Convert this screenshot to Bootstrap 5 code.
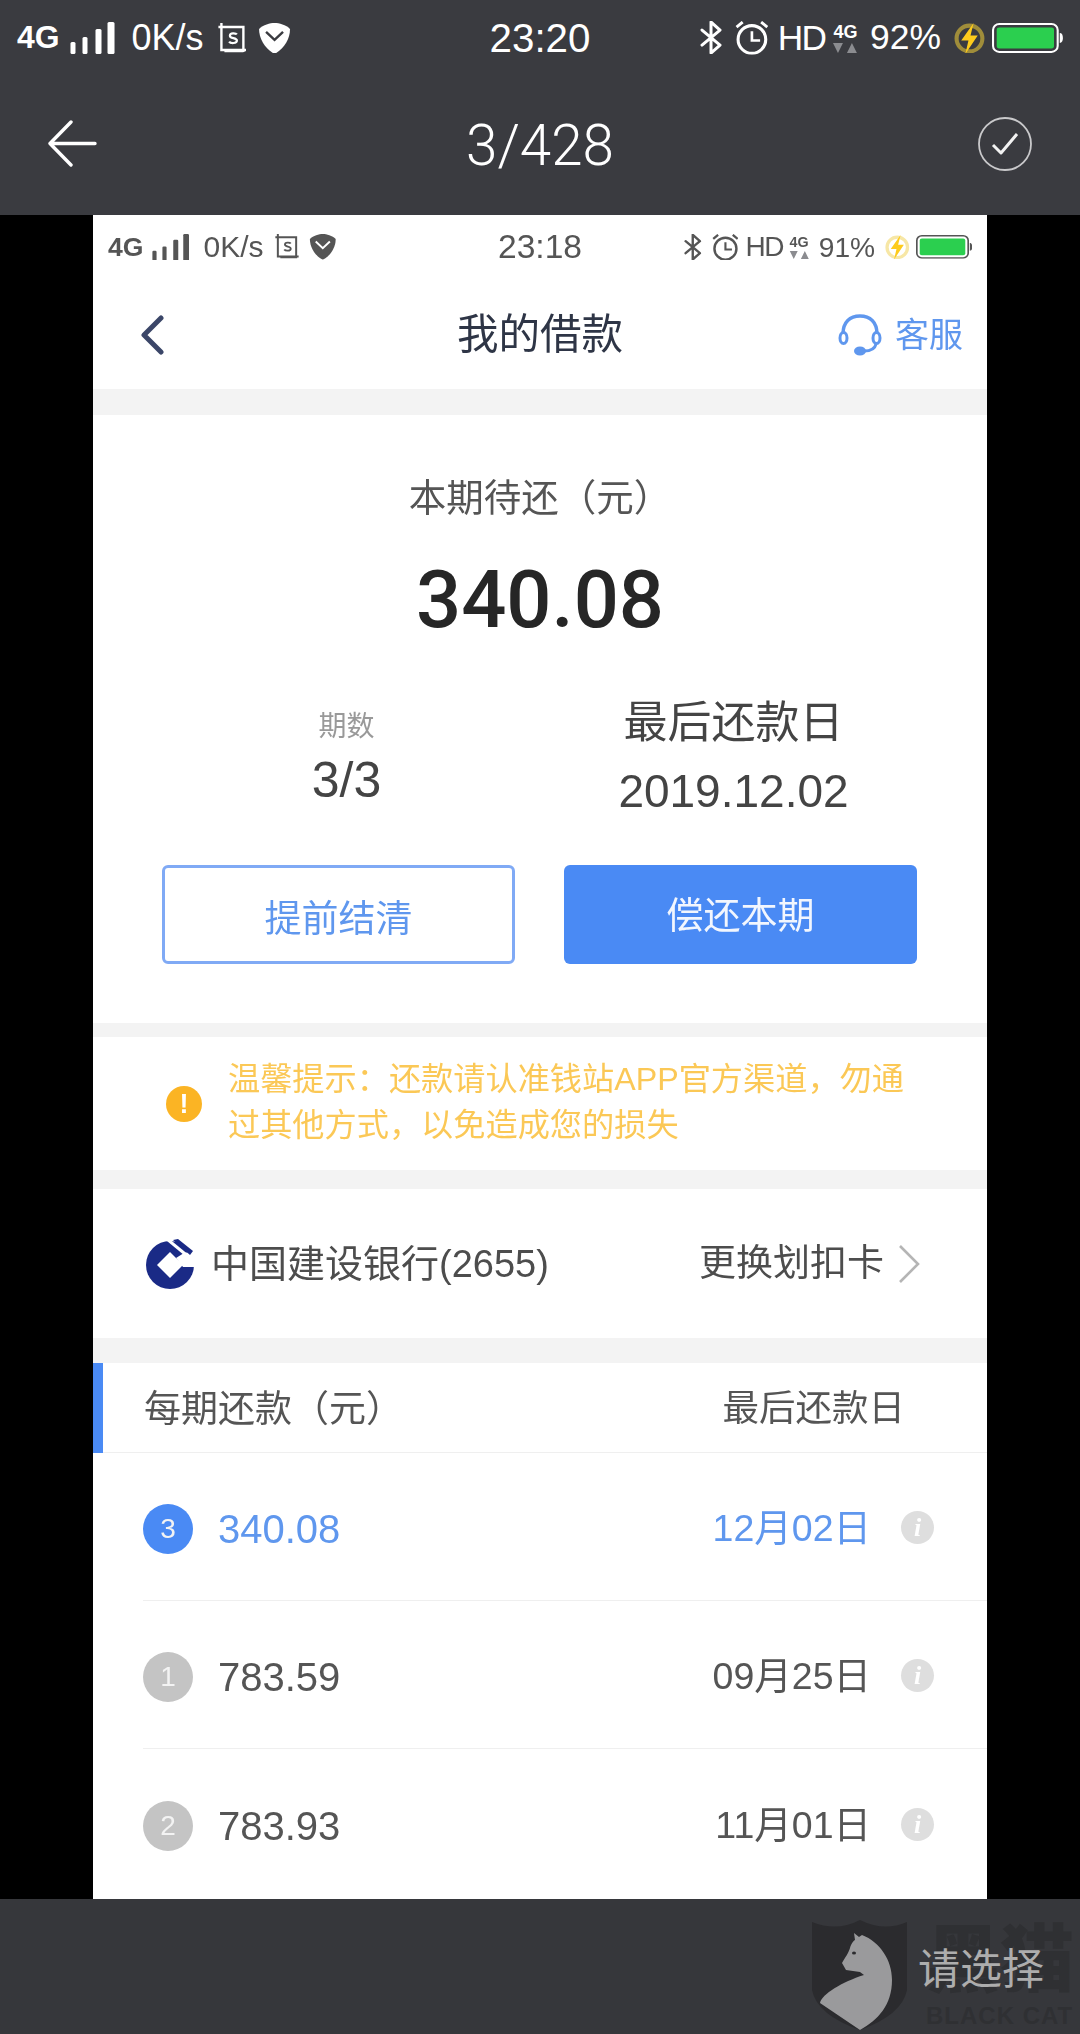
<!DOCTYPE html>
<html lang="zh-CN">
<head>
<meta charset="utf-8">
<title>3/428</title>
<link href="https://cdn.jsdelivr.net/npm/bootstrap@5.3.0/dist/css/bootstrap.min.css" rel="stylesheet">
<style>
html,body{margin:0;height:2034px;overflow:hidden;background:#000}
body{font-family:"Liberation Sans","Noto Sans CJK SC",sans-serif;color:#333}
.page{width:1080px;height:2034px}
.dark-top{height:215px;background:#3a3b40;color:#fff}
.stage{height:1684px;background:#000}
.phone-panel{width:894px;height:1684px;background:#fff;filter:blur(.5px)}
.dark-bottom{height:135px;background:#36373b;padding:6px 36px 0 0;position:relative;overflow:hidden}
.pick-text{font-size:42px;color:#adadad;position:relative;line-height:1}
.wm-shield{position:absolute;left:812px;top:21px;width:95px;height:110px}
.wm-big{position:absolute;left:926px;top:22px;font-size:74px;line-height:80px;font-weight:900;color:#2f3033;white-space:nowrap}
.wm-small{position:absolute;left:926px;top:103px;font-size:24px;line-height:28px;font-weight:700;color:#2f3033;letter-spacing:1px;white-space:nowrap}

.sbar{display:grid;grid-template-columns:1fr auto 1fr;align-items:center;line-height:1;white-space:nowrap}
.sbar svg{display:block;flex:none}
.sbar-out{font-size:36px;height:72px;padding:4px 17px 0;color:#fff}
.sbar-in{font-size:30px;height:60px;padding:4px 15px 0;color:#555}
.sbar-in .st-right{font-size:28.6px}
.st-4g{font-size:.886em;font-weight:700}
.ic-bars{width:1.25em;height:.89em;margin:0 .47em 0 .28em}
.ic-crop{width:.8em;height:.86em;margin-left:.39em}
.ic-shield{width:.92em;height:.86em;margin-left:.33em}
.st-time{font-size:1.12em}
.ic-bt{width:.64em;height:.92em}
.ic-alarm{width:.94em;height:.94em;margin-left:.33em}
.st-hd{font-size:.98em;margin-left:.25em;letter-spacing:-.05em}
.st-net{width:.72em;margin-left:.2em;font-size:1em}
.st-net-t{font-size:.5em;font-weight:700;display:block;text-align:center;line-height:1}
.ic-tri{width:.72em;height:.28em;margin-top:.08em}
.st-pct{font-size:.985em;margin-left:.33em}
.ic-bolt{width:.86em;height:.86em;margin-left:.36em}
.ic-batt{width:1.97em;height:.83em;margin-left:.2em}

.page-nav{display:grid;grid-template-columns:1fr auto 1fr;align-items:center;height:143px;padding:0 48px}
.page-count{font-family:Roboto,"Liberation Sans",sans-serif;font-weight:300;font-size:56.5px;line-height:1;padding-top:6px}

.hdr{height:114px;padding:5px 24px 0;display:grid;grid-template-columns:1fr auto 1fr;align-items:center}
.hdr-back{margin-left:23px}
.hdr-title{font-size:41.5px;color:#2e3546;font-weight:400;line-height:1}
.hdr-link{font-size:34px;color:#5f97ee;line-height:1;gap:13px}
.gap-band{background:#f3f3f3}
.gb-26{height:26px}.gb-14{height:14px}.gb-19{height:19px}.gb-25{height:25px}

.due{height:608px;padding-top:61px}
.due-label{font-size:37.5px;line-height:44px;color:#555}
.due-amt{font-family:Roboto,"Liberation Sans",sans-serif;font-size:79.5px;line-height:90px;font-weight:500;color:#262626;margin-top:35px}
.stats{margin-top:50px;padding:0 60px}
.st-a{font-size:28px;line-height:40px;color:#999;margin-top:12px}
.st-b{font-size:50px;line-height:56px;color:#444;margin-top:5px}
.st-c{font-size:44px;line-height:56px;color:#444}
.st-d{font-size:46px;line-height:56px;color:#444;margin-top:12px}
.act-row{margin-top:46px;padding:0 69px;gap:49px}
.btn.act{width:353px;height:99px;font-size:37px;border-radius:6px;padding:0;line-height:1;display:flex;align-items:center;justify-content:center}
.btn.act-o{background:#fff;border:3px solid #80aaf5;color:#5f97ee;padding-top:10px}
.btn.act-f{background:#4a8af4;border:0;color:#f2f6fe;padding-top:4px}

.tip{height:133px;padding:0 0 4px 73px;gap:26px}
.tip-mark{width:36px;height:36px;border-radius:50%;background:#fbb424;color:#fff;font-size:27px;font-weight:700;line-height:36px;text-align:center;flex:none;margin-top:4px}
.tip-text{font-size:32.2px;line-height:46px;color:#fbc856;width:690px}

.bank{height:149px;padding:0 66px 0 53px}
.bank-name{font-size:38px;color:#4d4d4d;margin-left:17px;line-height:1}
.bank-act{font-size:37px;color:#4d4d4d;line-height:1}
.bank-chev{width:24px;height:40px;margin-left:13px;display:block}

.t-head{height:90px;border-left:10px solid #4a8af4;padding:3px 82px 0 41px;position:relative;color:#555;line-height:1}
.t-head-l{font-size:37px}
.t-head-r{font-size:36.5px}
.t-line{height:1px;background:#efefef;margin-top:-1px}
.t-row{height:148px;margin-left:50px;padding:5px 53px 0 0;border-bottom:1px solid #efefef}
.t-row-end{border-bottom:0}
.num-dot{width:50px;height:50px;border-radius:50%;background:#c4c4c4;color:#f3f3f3;font-size:28px;line-height:50px;text-align:center;flex:none}
.num-dot-on{background:#4a8af4}
.t-amt{font-size:40px;color:#555;margin-left:25px;line-height:1}
.t-date{font-size:37.5px;color:#555;line-height:1}
.is-on{color:#5f97ee}
.inf-dot{width:33px;height:33px;border-radius:50%;background:#dedede;color:#fff;font:italic 700 26px/33px "Liberation Serif",serif;text-align:center;margin-left:30px;flex:none;margin-top:-3px}
</style>
</head>
<body>
<svg width="0" height="0" class="position-absolute">
  <symbol id="s-bars" viewBox="0 0 44 32"><rect x="0" y="20" width="5" height="12" rx="1.5" fill="currentColor"/><rect x="12" y="15" width="5" height="17" rx="1.5" fill="currentColor"/><rect x="25" y="7" width="6" height="25" rx="1.5" fill="currentColor"/><rect x="37" y="0" width="7" height="32" rx="1.5" fill="currentColor"/></symbol>
  <symbol id="s-crop" viewBox="0 0 28 31"><path d="M3 0v4h22v25M0 4h3v23h25M6 28h19" fill="none" stroke="currentColor" stroke-width="2.4"/><path d="M18.500 11.500c-1-1.500-7-2-7 1.200 0 3.300 7 1.600 7 4.900 0 3.200-6.500 3-7.800 1" fill="none" stroke="currentColor" stroke-width="2.200"/></symbol>
  <symbol id="s-shield" viewBox="0 0 31 31"><path d="M15.500 0C20 0 27 2 31 6c0 10-6 20-15.500 25C6 26 0 16 0 6 4 2 11 0 15.500 0z" fill="currentColor"/><path d="M7 9l8.500 8L24 9" fill="none" stroke="var(--hole)" stroke-width="2.400"/></symbol>
  <symbol id="s-bt" viewBox="0 0 23 33"><path d="M2 9l18 15-9 8V1l9 8L2 24" fill="none" stroke="currentColor" stroke-width="3" stroke-linejoin="round" stroke-linecap="round"/></symbol>
  <symbol id="s-alarm" viewBox="0 0 32 33"><circle cx="16" cy="18" r="13.500" fill="none" stroke="currentColor" stroke-width="3"/><path d="M16 10v9h8" fill="none" stroke="currentColor" stroke-width="2.600"/><path d="M1 6l6-5M31 6l-6-5" fill="none" stroke="currentColor" stroke-width="2.800"/></symbol>
  <symbol id="s-tri" viewBox="0 0 26 10"><path d="M1 0h10l-5 10zM15 10h10l-5-10z" fill="#8b8c90"/></symbol>
  <symbol id="s-bolt" viewBox="0 0 30 30"><circle cx="15" cy="15" r="12.500" fill="none" stroke="var(--ring)" stroke-width="4"/><path d="M19 0L7 17h7l-3 13 12-18h-7z" fill="#fdcb1c"/></symbol>
  <symbol id="s-batt" viewBox="0 0 68 30" preserveAspectRatio="none"><rect x="1" y="1" width="62" height="28" rx="6" fill="none" stroke="currentColor" stroke-width="2"/><rect x="4.500" y="4.500" width="55" height="21" rx="2.500" fill="#2bcf4f"/><path d="M65 10c2 0 3 2 3 5s-1 5-3 5z" fill="currentColor"/></symbol>
</svg>
<div class="page d-flex flex-column">
  <div class="dark-top">
    <div class="sbar sbar-out" style="--hole:#3a3b40;--ring:#a08d3a">
      <div class="d-flex align-items-center"><span class="st-4g">4G</span><svg class="ic-bars"><use href="#s-bars"/></svg><span>0K/s</span><svg class="ic-crop"><use href="#s-crop"/></svg><svg class="ic-shield"><use href="#s-shield"/></svg></div>
      <div class="st-time">23:20</div>
      <div class="d-flex align-items-center justify-content-end st-right"><svg class="ic-bt"><use href="#s-bt"/></svg><svg class="ic-alarm"><use href="#s-alarm"/></svg><span class="st-hd">HD</span><span class="st-net"><span class="st-net-t">4G</span><svg class="ic-tri"><use href="#s-tri"/></svg></span><span class="st-pct">92%</span><svg class="ic-bolt"><use href="#s-bolt"/></svg><svg class="ic-batt"><use href="#s-batt"/></svg></div>
    </div>
    <div class="page-nav">
      <div><svg width="49" height="47" viewBox="0 0 49 47" class="d-block"><path d="M23 2L2 23.500 23 45M2 23.500h45" fill="none" stroke="#fff" stroke-width="3.400" stroke-linecap="round" stroke-linejoin="round"/></svg></div>
      <div class="page-count">3/428</div>
      <div class="d-flex justify-content-end"><svg width="54" height="54" viewBox="0 0 54 54" class="d-block"><circle cx="27" cy="27" r="26" fill="none" stroke="#c9c9cb" stroke-width="1.800"/><path d="M15 28l8 8 16-19" fill="none" stroke="#f2f2f2" stroke-width="3" stroke-linejoin="round"/></svg></div>
    </div>
  </div>

  <div class="stage d-flex justify-content-center">
    <div class="phone-panel">
      <div class="sbar sbar-in" style="--hole:#fff;--ring:#f7e7a6">
        <div class="d-flex align-items-center"><span class="st-4g">4G</span><svg class="ic-bars"><use href="#s-bars"/></svg><span>0K/s</span><svg class="ic-crop"><use href="#s-crop"/></svg><svg class="ic-shield"><use href="#s-shield"/></svg></div>
        <div class="st-time">23:18</div>
        <div class="d-flex align-items-center justify-content-end st-right"><svg class="ic-bt"><use href="#s-bt"/></svg><svg class="ic-alarm"><use href="#s-alarm"/></svg><span class="st-hd">HD</span><span class="st-net"><span class="st-net-t">4G</span><svg class="ic-tri"><use href="#s-tri"/></svg></span><span class="st-pct">91%</span><svg class="ic-bolt"><use href="#s-bolt"/></svg><svg class="ic-batt"><use href="#s-batt"/></svg></div>
      </div>
      <div class="hdr">
        <div class="hdr-back"><svg width="24" height="40" viewBox="0 0 24 40" class="d-block"><path d="M21 3L4 20l17 17" fill="none" stroke="#3b4668" stroke-width="5" stroke-linecap="round" stroke-linejoin="round"/></svg></div>
        <div class="hdr-title">我的借款</div>
        <div class="d-flex align-items-center justify-content-end hdr-link">
          <svg width="44" height="42" viewBox="0 0 44 42" class="d-block"><path d="M5 20C5 8 12 2 22 2S39 8 39 20" fill="none" stroke="#5f97ee" stroke-width="3.400"/><ellipse cx="5.500" cy="24" rx="3.500" ry="5.500" fill="none" stroke="#5f97ee" stroke-width="3"/><ellipse cx="38.500" cy="24" rx="3.500" ry="5.500" fill="none" stroke="#5f97ee" stroke-width="3"/><path d="M38 30c-1 5-6 7-12 7" fill="none" stroke="#5f97ee" stroke-width="3"/><ellipse cx="22" cy="37" rx="6" ry="4.500" fill="#5f97ee"/></svg>
          <span>客服</span>
        </div>
      </div>
      <div class="gap-band gb-26"></div>

      <section class="due text-center">
        <div class="due-label">本期待还（元）</div>
        <div class="due-amt">340.08</div>
        <div class="row g-0 stats">
          <div class="col-6"><div class="st-a">期数</div><div class="st-b">3/3</div></div>
          <div class="col-6"><div class="st-c">最后还款日</div><div class="st-d">2019.12.02</div></div>
        </div>
        <div class="d-flex act-row">
          <button type="button" class="btn act act-o">提前结清</button>
          <button type="button" class="btn act act-f">偿还本期</button>
        </div>
      </section>
      <div class="gap-band gb-14"></div>

      <section class="tip d-flex align-items-center">
        <div class="tip-mark">!</div>
        <div class="tip-text">温馨提示：还款请认准钱站APP官方渠道，勿通过其他方式，以免造成您的损失</div>
      </section>
      <div class="gap-band gb-19"></div>

      <section class="bank d-flex align-items-center justify-content-between">
        <div class="d-flex align-items-center">
          <svg width="48" height="50" viewBox="0 0 48 50" class="d-block"><circle cx="24" cy="26" r="24" fill="#1a2a86"/><path d="M24 13l13 13-13 13-13-13z" fill="#fff"/><path d="M30 19l8-5 12-2v16H37z" fill="#fff"/><path d="M21 0l23 19" stroke="#fff" stroke-width="3" fill="none"/><path d="M27 1l5-1 15 12-3 4z" fill="#1a2a86"/></svg>
          <span class="bank-name">中国建设银行(2655)</span>
        </div>
        <div class="d-flex align-items-center">
          <span class="bank-act">更换划扣卡</span>
          <svg class="bank-chev" viewBox="0 0 24 40"><path d="M3 2l18 18L3 38" fill="none" stroke="#b5b5b5" stroke-width="2.600"/></svg>
        </div>
      </section>
      <div class="gap-band gb-25"></div>

      <div class="t-head d-flex align-items-center justify-content-between"><span class="t-head-l">每期还款（元）</span><span class="t-head-r">最后还款日</span></div>
      <div class="t-line"></div>
      <div class="t-row d-flex align-items-center">
        <div class="num-dot num-dot-on">3</div><div class="t-amt is-on">340.08</div>
        <div class="t-date is-on ms-auto">12月02日</div><div class="inf-dot">i</div>
      </div>
      <div class="t-row d-flex align-items-center">
        <div class="num-dot">1</div><div class="t-amt">783.59</div>
        <div class="t-date ms-auto">09月25日</div><div class="inf-dot">i</div>
      </div>
      <div class="t-row t-row-end d-flex align-items-center">
        <div class="num-dot">2</div><div class="t-amt">783.93</div>
        <div class="t-date ms-auto">11月01日</div><div class="inf-dot">i</div>
      </div>
    </div>
  </div>

  <div class="dark-bottom d-flex align-items-center justify-content-end">
    <svg class="wm-shield" viewBox="0 0 95 110"><path d="M0 2Q25 12 48 0 72 12 95 2V70Q90 95 48 110 5 95 0 70Z" fill="#2b2b2e"/><path d="M42 13l5 4 3-2C68 22 80 40 80 60 80 85 66 100 48 110L8 83C10 74 30 62 52 55L48 52 34 50 30 43C33 38 37 32 38 28 39 24 42 20 43 20Z" fill="#9a9a9c"/><ellipse cx="42" cy="33" rx="2" ry="1.500" fill="#2b2b2e"/></svg>
    <div class="wm-big">黑猫</div>
    <div class="wm-small">BLACK CAT</div>
    <span class="pick-text">请选择</span>
  </div>
</div>
</body>
</html>
